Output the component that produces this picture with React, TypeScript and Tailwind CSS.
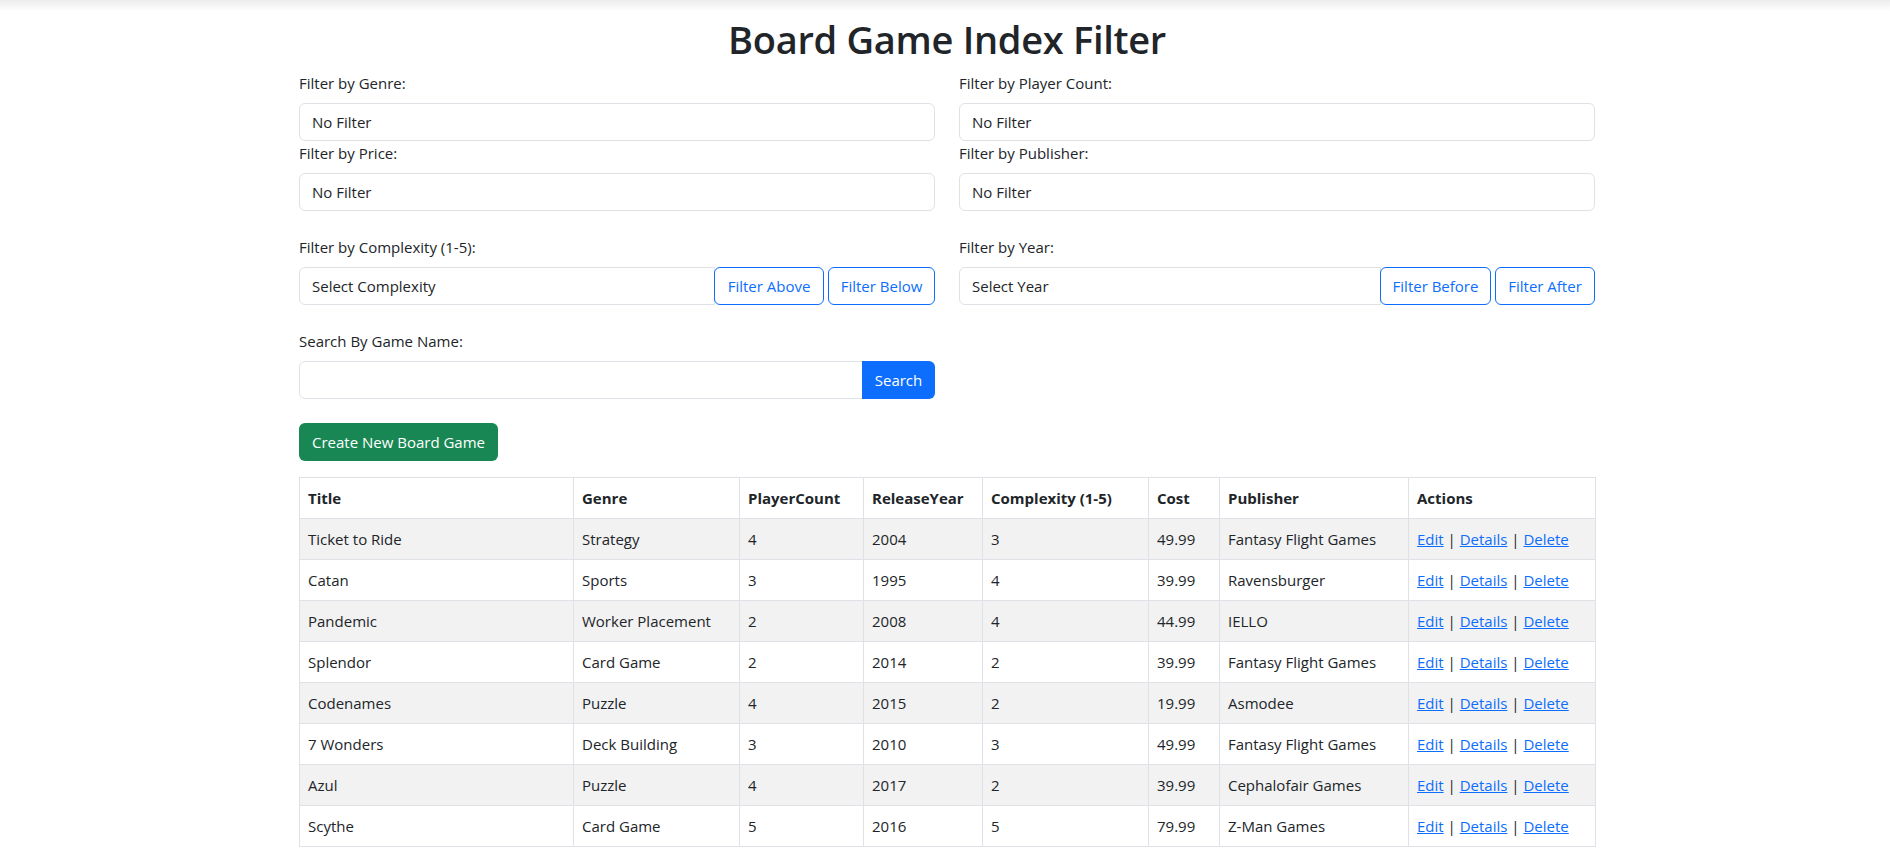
import React from "react";

const rows = [
  ["Ticket to Ride", "Strategy", "4", "2004", "3", "49.99", "Fantasy Flight Games"],
  ["Catan", "Sports", "3", "1995", "4", "39.99", "Ravensburger"],
  ["Pandemic", "Worker Placement", "2", "2008", "4", "44.99", "IELLO"],
  ["Splendor", "Card Game", "2", "2014", "2", "39.99", "Fantasy Flight Games"],
  ["Codenames", "Puzzle", "4", "2015", "2", "19.99", "Asmodee"],
  ["7 Wonders", "Deck Building", "3", "2010", "3", "49.99", "Fantasy Flight Games"],
  ["Azul", "Puzzle", "4", "2017", "2", "39.99", "Cephalofair Games"],
  ["Scythe", "Card Game", "5", "2016", "5", "79.99", "Z-Man Games"],
];

const headers = [
  { t: "Title", w: "w-[274px]" },
  { t: "Genre", w: "w-[166px]" },
  { t: "PlayerCount", w: "w-[124px]" },
  { t: "ReleaseYear", w: "w-[119px]" },
  { t: "Complexity (1-5)", w: "w-[166px]" },
  { t: "Cost", w: "w-[71px]" },
  { t: "Publisher", w: "w-[189px]" },
  { t: "Actions", w: "w-[187px]" },
];

function Select({ value, className = "" }: { value: string; className?: string }) {
  return (
    <div
      className={
        "h-[38px] border border-[#dee2e6] bg-white px-3 flex items-center text-[#212529] " +
        className
      }
    >
      {value}
    </div>
  );
}

function Field({ label, value }: { label: string; value: string }) {
  return (
    <div className="flex flex-col">
      <div className="h-6 leading-6 mb-2">{label}</div>
      <Select value={value} className="rounded-md" />
    </div>
  );
}

function OutlineBtn({ children, className = "" }: { children: React.ReactNode; className?: string }) {
  return (
    <button
      className={
        "h-[38px] border border-[#0d6efd] text-[#0d6efd] bg-white rounded-md leading-6 shrink-0 whitespace-nowrap text-center " +
        className
      }
    >
      {children}
    </button>
  );
}

export default function App() {
  return (
    <div className="min-h-[848px] bg-white text-[#212529] text-[15px] leading-6 font-['Open_Sans','Noto_Sans',sans-serif]">
      <div className="h-[11px] bg-gradient-to-b from-[#ececec] to-white" />
      <div className="w-[1296px] ml-[299px]">
        <h1 className="text-center text-[38px] leading-[48px] font-semibold mt-1 mb-2 tracking-[-0.3px]">
          Board Game Index Filter
        </h1>
        <div className="grid grid-cols-2 gap-x-6">
          <Field label="Filter by Genre:" value="No Filter" />
          <Field label="Filter by Player Count:" value="No Filter" />
          <Field label="Filter by Price:" value="No Filter" />
          <Field label="Filter by Publisher:" value="No Filter" />
          <div className="flex flex-col mt-6">
            <div className="h-6 leading-6 mb-2">Filter by Complexity (1-5):</div>
            <div className="flex">
              <Select value="Select Complexity" className="flex-1 rounded-l-md" />
              <OutlineBtn className="w-[110px] -ml-px">Filter Above</OutlineBtn>
              <OutlineBtn className="w-[107px] ml-[4px]">Filter Below</OutlineBtn>
            </div>
          </div>
          <div className="flex flex-col mt-6">
            <div className="h-6 leading-6 mb-2">Filter by Year:</div>
            <div className="flex">
              <Select value="Select Year" className="flex-1 rounded-l-md" />
              <OutlineBtn className="w-[111px] -ml-px">Filter Before</OutlineBtn>
              <OutlineBtn className="w-[100px] ml-[4px]">Filter After</OutlineBtn>
            </div>
          </div>
          <div className="flex flex-col mt-6">
            <div className="h-6 leading-6 mb-2">Search By Game Name:</div>
            <div className="flex">
              <div className="flex-1 h-[38px] border border-[#dee2e6] rounded-l-md" />
              <button className="h-[38px] w-[73px] bg-[#0d6efd] text-white rounded-r-md -ml-px">Search</button>
            </div>
          </div>
          <div />
        </div>
        <button className="mt-6 h-[38px] w-[199px] bg-[#198754] text-white rounded-md whitespace-nowrap">
          Create New Board Game
        </button>
        <table className="mt-4 w-full border-collapse border border-[#dee2e6] table-fixed">
          <thead>
            <tr>
              {headers.map((h) => (
                <th key={h.t} className={"text-left font-bold border border-[#dee2e6] px-2 py-2 " + h.w}>
                  {h.t}
                </th>
              ))}
            </tr>
          </thead>
          <tbody>
            {rows.map((r, i) => (
              <tr key={r[0]} className={i % 2 === 0 ? "bg-[#f2f2f2]" : "bg-white"}>
                {r.map((c, j) => (
                  <td key={j} className="border border-[#dee2e6] px-2 py-2">
                    {c}
                  </td>
                ))}
                <td className="border border-[#dee2e6] px-2 py-2">
                  <a href="#" className="text-[#0d6efd] underline">Edit</a> |{" "}
                  <a href="#" className="text-[#0d6efd] underline">Details</a> |{" "}
                  <a href="#" className="text-[#0d6efd] underline">Delete</a>
                </td>
              </tr>
            ))}
          </tbody>
        </table>
      </div>
    </div>
  );
}
